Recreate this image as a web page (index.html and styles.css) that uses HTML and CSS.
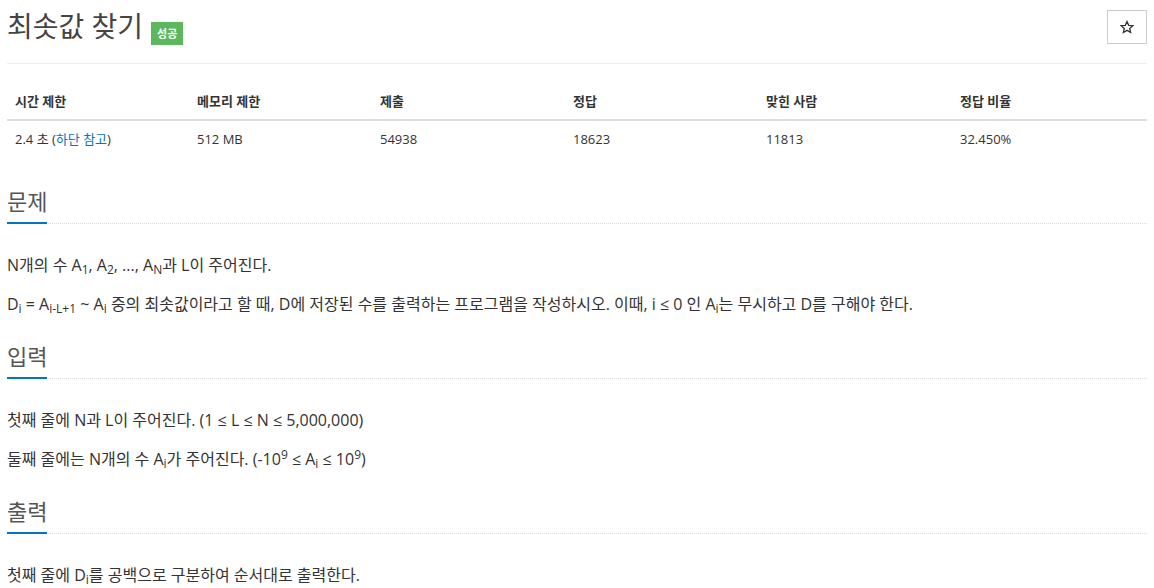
FILE: index.html
```html
<!DOCTYPE html>
<html lang="ko">
<head>
<meta charset="utf-8">
<title>최솟값 찾기</title>
<link rel="stylesheet" href="styles.css">
</head>
<body>
<div class="page">
  <div class="page-header">
    <h1 class="title"><span class="title-text">최솟값 찾기</span><span class="badge">성공</span></h1>
    <button class="star-btn" type="button" aria-label="즐겨찾기">
      <svg width="14" height="14" viewBox="0 0 24 24" fill="none" stroke="#333" stroke-width="2.2" stroke-linejoin="miter"><path d="M12 2.5l2.9 6.6 7.1.6-5.4 4.7 1.6 7-6.2-3.7-6.2 3.7 1.6-7L2 9.7l7.1-.6z"/></svg>
    </button>
  </div>

  <table class="info">
    <thead>
      <tr>
        <th class="c1">시간 제한</th>
        <th class="c2">메모리 제한</th>
        <th class="c3">제출</th>
        <th class="c4">정답</th>
        <th class="c5">맞힌 사람</th>
        <th class="c6">정답 비율</th>
      </tr>
    </thead>
    <tbody>
      <tr>
        <td>2.4 초 (<a href="#">하단 참고</a>)</td>
        <td>512 MB</td>
        <td>54938</td>
        <td>18623</td>
        <td>11813</td>
        <td>32.450%</td>
      </tr>
    </tbody>
  </table>

  <section class="section">
    <div class="headline"><h2>문제</h2></div>
    <p>N개의 수 A<sub>1</sub>, A<sub>2</sub>, ..., A<sub>N</sub>과 L이 주어진다.</p>
    <p>D<sub>i</sub> = A<sub>i-L+1</sub> ~ A<sub>i</sub> 중의 최솟값이라고 할 때, D에 저장된 수를 출력하는 프로그램을 작성하시오. 이때, i ≤ 0 인 A<sub>i</sub>는 무시하고 D를 구해야 한다.</p>
  </section>

  <section class="section">
    <div class="headline"><h2>입력</h2></div>
    <p>첫째 줄에 N과 L이 주어진다. (1 ≤ L ≤ N ≤ 5,000,000)</p>
    <p>둘째 줄에는 N개의 수 A<sub>i</sub>가 주어진다. (-10<sup>9</sup> ≤ A<sub>i</sub> ≤ 10<sup>9</sup>)</p>
  </section>

  <section class="section">
    <div class="headline"><h2>출력</h2></div>
    <p>첫째 줄에 D<sub>i</sub>를 공백으로 구분하여 순서대로 출력한다.</p>
  </section>
</div>
</body>
</html>
```

FILE: styles.css
```css
html, body {
  margin: 0;
  padding: 0;
  background: #fff;
}

body {
  font-family: "Open Sans", "Noto Sans CJK KR", sans-serif;
  color: #333;
  font-size: 13px;
}

.page {
  padding: 0 7px;
}

.page-header {
  display: flex;
  justify-content: space-between;
  align-items: flex-start;
  border-bottom: 1px solid #eee;
  height: 64px;
  box-sizing: border-box;
}

.title {
  display: flex;
  align-items: flex-start;
  margin: 0;
  padding-top: 11px;
  font-size: 28px;
  line-height: 31px;
  font-weight: 400;
  color: #444;
}

.badge {
  margin-left: 8px;
  margin-top: 11px;
  background: #5cb85c;
  color: #fff;
  font-size: 11px;
  font-weight: 700;
  line-height: 23px;
  padding: 0 6px;
}

.star-btn {
  margin-top: 10px;
  width: 40px;
  height: 34px;
  border: 1px solid #ccc;
  background: #fff;
  display: flex;
  align-items: center;
  justify-content: center;
  padding: 0;
}

.info {
  width: 100%;
  border-collapse: collapse;
  margin: 19px 0 30px;
  table-layout: fixed;
}

.info th,
.info td {
  text-align: left;
  padding: 8px;
  line-height: 20px;
  font-size: 13px;
  box-sizing: border-box;
}

.info th {
  font-weight: 700;
  border-bottom: 2px solid #ddd;
}

.info td {
  line-height: 18px;
  padding-top: 9px;
}

.info .c1 { width: 182px; }
.info .c2 { width: 183px; }
.info .c3 { width: 193px; }
.info .c4 { width: 193px; }
.info .c5 { width: 194px; }
.info .c6 { width: 195px; }

.info a {
  color: #0076c0;
  text-decoration: none;
}

.section {
  margin-top: 24px;
}

.headline {
  border-bottom: 1px dotted #ddd;
}

.headline h2 {
  display: inline-block;
  margin: 0 0 -1px;
  font-size: 22px;
  line-height: 30px;
  padding-bottom: 6px;
  font-weight: 400;
  color: #555;
  border-bottom: 2px solid #0076c0;
}

.section p {
  font-size: 16px;
  line-height: 26px;
  margin: 28px 0 0;
}

.section p + p {
  margin-top: 13px;
}

sub, sup {
  font-size: 75%;
  line-height: 0;
  position: relative;
  vertical-align: baseline;
}

sub { bottom: -0.25em; }
sup { top: -0.5em; }
```
